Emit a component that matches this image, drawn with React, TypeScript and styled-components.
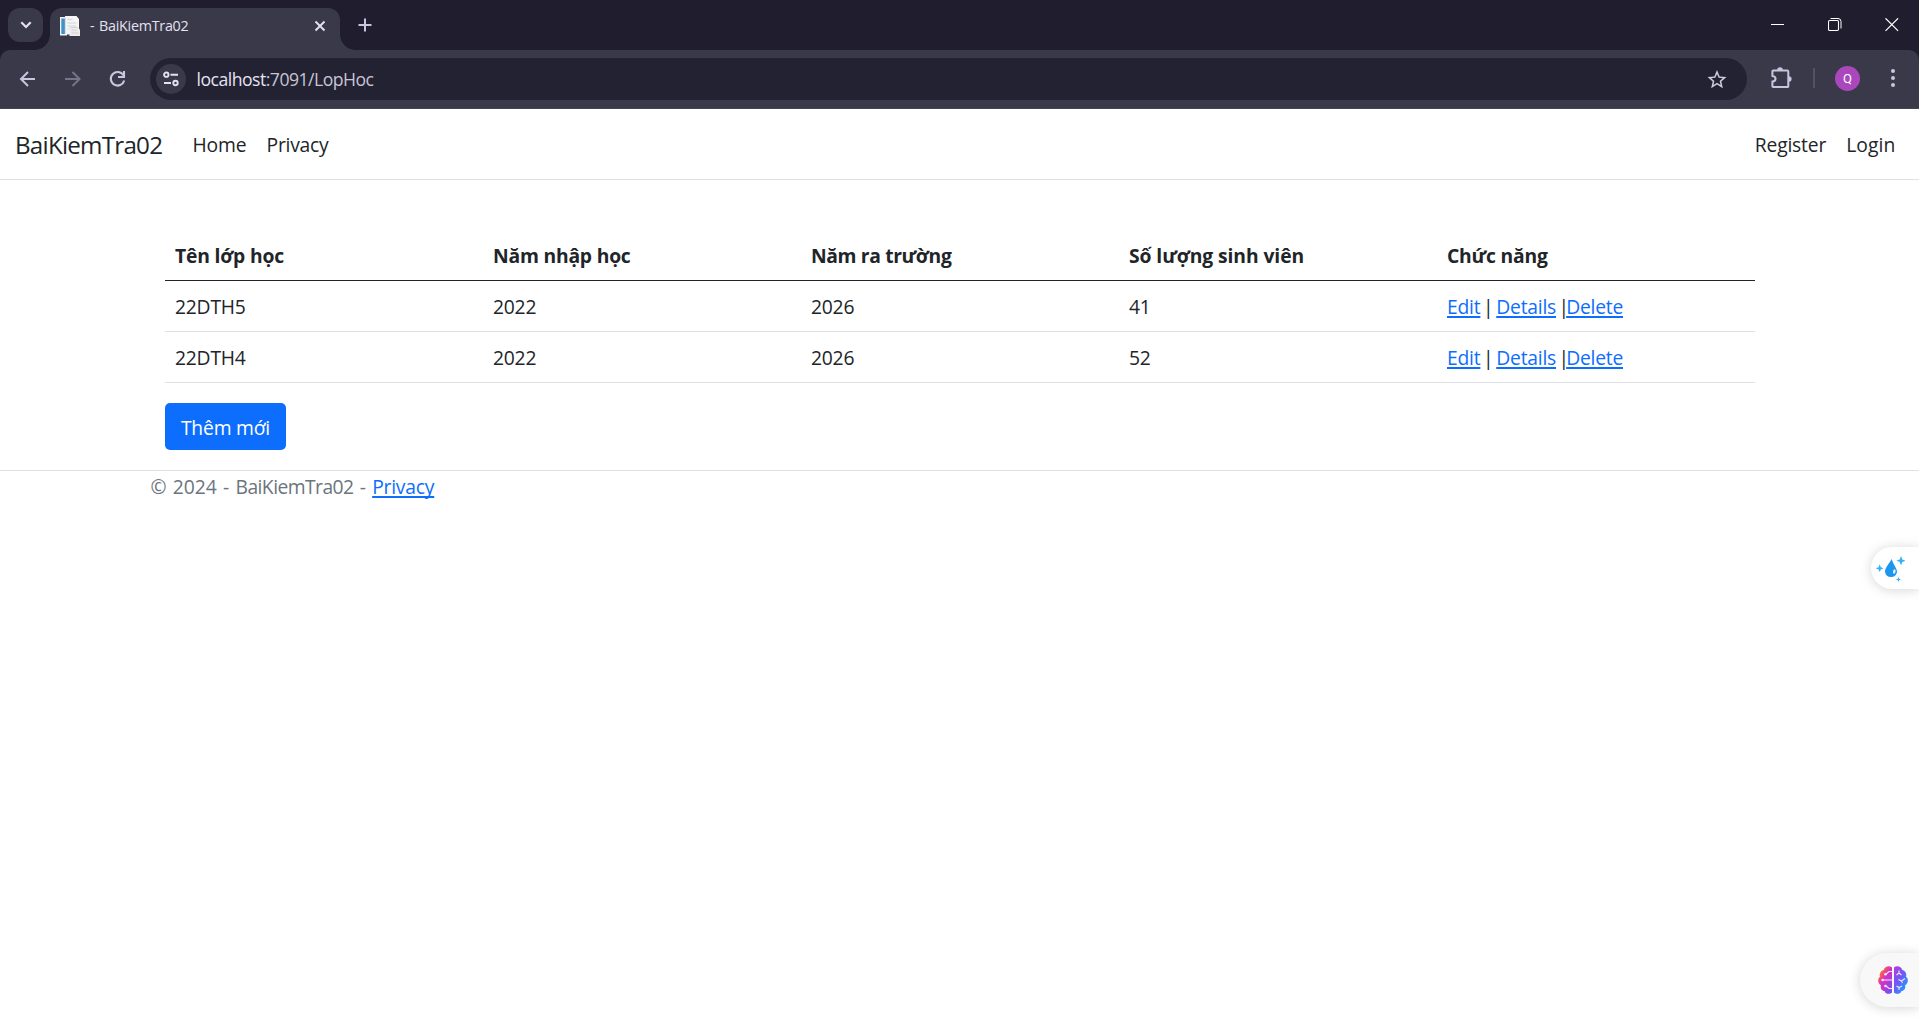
import React from 'react';
import styled, { createGlobalStyle } from 'styled-components';

const GlobalStyle = createGlobalStyle`
  *, *::before, *::after { box-sizing: border-box; }
  html, body { margin: 0; height: 100%; overflow: hidden; }
  body {
    background: #fff;
    color: #212529;
    font-family: "Open Sans", "Noto Sans", sans-serif;
    font-size: 19.3px;
    font-weight: 370;
    line-height: 30px;
  }
`;

/* ---------- browser window ---------- */

const Window = styled.div`
  display: flex;
  flex-direction: column;
  height: 1020px;
  overflow: hidden;
  position: relative;
`;

const TabStrip = styled.div`
  display: flex;
  align-items: flex-start;
  height: 50px;
  padding: 8px 0 0 8px;
  background: #1f1d2e;
  flex: none;
`;

const TabSearch = styled.div`
  display: flex;
  align-items: center;
  justify-content: center;
  width: 35px;
  height: 34px;
  border-radius: 12px;
  background: #3a394a;
`;

const Tab = styled.div`
  position: relative;
  display: flex;
  align-items: center;
  width: 290px;
  height: 42px;
  margin-left: 7px;
  padding: 0 14px 7px 10px;
  border-radius: 12px 12px 0 0;
  background: #3a394a;
  &::before, &::after {
    content: "";
    position: absolute;
    bottom: 0;
    width: 15px;
    height: 15px;
  }
  &::before {
    left: -15px;
    background: radial-gradient(circle at 0 0, transparent 14.5px, #3a394a 15px);
  }
  &::after {
    right: -15px;
    background: radial-gradient(circle at 100% 0, transparent 14.5px, #3a394a 15px);
  }
`;

const TabTitle = styled.span`
  flex: 1;
  margin: 1px 0 0 10px;
  color: #e4e1f0;
  font-size: 14.3px;
  font-weight: 400;
  letter-spacing: -0.26px;
  line-height: 20px;
  white-space: nowrap;
  word-spacing: 1.3px;
`;

const NewTab = styled.div`
  display: flex;
  margin: 10px 0 0 18px;
`;

const WindowButtons = styled.div`
  display: flex;
  align-items: center;
  gap: 43px;
  margin: 10px 20px 0 auto;
`;

const ToolbarBack = styled.div`
  background: #1f1d2e;
  flex: none;
`;

const Toolbar = styled.div`
  display: flex;
  align-items: center;
  height: 59px;
  padding: 0 18px 2px 16px;
  border-radius: 10px 10px 0 0;
  border-bottom: 1px solid #464553;
  background: #3a394a;
`;

const NavButtons = styled.div`
  display: flex;
  gap: 21px;
  margin: 1px 20px 0 0;
`;

const AddressBar = styled.div`
  display: flex;
  align-items: center;
  width: 1597px;
  height: 42px;
  margin-top: 1px;
  padding: 0 18px 0 6px;
  border-radius: 21px;
  background: #232233;
`;

const SiteInfo = styled.div`
  display: flex;
  align-items: center;
  justify-content: center;
  width: 30px;
  height: 30px;
  border-radius: 50%;
  background: #3a394a;
`;

const Url = styled.span`
  flex: 1;
  margin-left: 10.5px;
  color: #c8c5d6;
  font-size: 17.6px;
  font-weight: 400;
  letter-spacing: -0.5px;
  line-height: 26px;
`;

const UrlHost = styled.span`
  color: #e6e3f2;
`;

const Extensions = styled.div`
  display: flex;
  margin-left: 23px;
`;

const Separator = styled.div`
  width: 2px;
  height: 20px;
  margin: 0 20px 0 21px;
  background: #535165;
`;

const Avatar = styled.div`
  display: flex;
  align-items: center;
  justify-content: center;
  width: 25px;
  height: 25px;
  border-radius: 50%;
  background: #ab47bc;
  color: #fff;
  font-family: Roboto, sans-serif;
  font-size: 13px;
  font-weight: 400;
  line-height: 25px;
`;

const Menu = styled.div`
  display: flex;
  margin-left: 29.5px;
`;

/* ---------- web page ---------- */

const Navbar = styled.nav`
  display: flex;
  align-items: center;
  height: 71px;
  padding: 2px 13.500px 0 15px;
  border-bottom: 1px solid #dee2e6;
`;

const Brand = styled.a`
  width: 147.5px;
  margin-right: 20px;
  font-size: 24.2px;
  letter-spacing: -0.76px;
  line-height: 38px;
  white-space: nowrap;
`;

const NavLinks = styled.div`
  display: flex;
  &:last-child { margin-left: auto; }
`;

const NavLink = styled.a<{ $tracking?: number }>`
  padding: 10px;
  letter-spacing: ${(p) => p.$tracking ?? 0}px;
`;

const Main = styled.main`
  margin: 50px 164px 20px 165px;
`;

const Table = styled.table`
  width: 100%;
  margin-bottom: 20px;
  border-collapse: separate;
  border-spacing: 0;
  table-layout: fixed;
`;

const HeadCell = styled.th<{ $tracking: number }>`
  height: 51px;
  padding: 11px 10px 9px;
  border-bottom: 1px solid #212529;
  font-weight: 700;
  letter-spacing: ${(p) => p.$tracking}px;
  text-align: left;
  white-space: nowrap;
`;

const Cell = styled.td`
  height: 51px;
  padding: 11px 10px 9px;
  border-bottom: 1px solid #dee2e6;
  letter-spacing: -0.22px;
  white-space: nowrap;
`;

const Link = styled.a`
  color: #0d6efd;
  letter-spacing: -0.22px;
  text-decoration: underline;
  text-decoration-thickness: 2px;
  text-underline-offset: 1.500px;
  text-decoration-skip-ink: none;
`;

const Bar = styled.span<{ $tight?: boolean }>`
  margin: 0 ${(p) => (p.$tight ? '-2.8px' : '-1.8px')} 0 -2.3px;
`;

const Button = styled.button`
  display: block;
  width: 121px;
  height: 47px;
  padding: 3px 0 0;
  border: 0;
  border-radius: 5px;
  background: #0d6efd;
  color: #fff;
  font: inherit;
  letter-spacing: -0.19px;
`;

const Footer = styled.footer`
  padding: 1px 0 0 150.500px;
  border-top: 1px solid #dee2e6;
  color: #6c757d;
  word-spacing: 1.2px;
`;

const SiteName = styled.span`
  letter-spacing: -0.55px;
`;

/* ---------- floating side widgets ---------- */

const SideWidget = styled.div<{ $top: number; $width: number; $height: number; $fill: string }>`
  position: absolute;
  right: 0;
  top: ${(p) => p.$top}px;
  display: flex;
  align-items: center;
  width: ${(p) => p.$width}px;
  height: ${(p) => p.$height}px;
  border-radius: ${(p) => p.$height / 2}px 0 0 ${(p) => p.$height / 2}px;
  background: ${(p) => p.$fill};
  box-shadow: 0 1px 12px rgba(0, 0, 0, 0.17);
`;

const BrainSlot = styled.div`
  display: flex;
  margin-left: 18px;
`;

/* ---------- drawings ---------- */

const tint = '#c9c5df';

const ChevronDown = () => (
  <svg width="12" height="8" viewBox="0 0 12 8" fill="none" stroke="#e4e1f0" strokeWidth="2.2">
    <path d="M1.300 1.300 6 6l4.700-4.700" />
  </svg>
);

const Favicon = () => (
  <svg width="20" height="20" viewBox="0 0 20 20">
    <path d="M0 1h7v18.500H0z" fill="#f3f3f3" />
    <path d="M1.300 2.500h4V18h-4z" fill="#3f93c9" />
    <path d="M5 0h11.500L19 3v15.500H5z" fill="#f6f6f6" />
    <path d="M7.500 3.500h5M7.500 7h9M7.500 10h9M7.500 13h2" stroke="#dcdfe2" strokeWidth="1.300" />
    <path d="M5.300 1.500V18" stroke="#d3d7da" />
    <path d="M9.500 11H17.500l2.500 2.500V20H9.500z" fill="#ededed" />
    <path d="M10.500 11.500h7M11.500 14h5M11.500 17h7" stroke="#d2d2d2" strokeWidth="1.100" />
  </svg>
);

const TabClose = () => (
  <svg width="12" height="12" viewBox="0 0 12 12" stroke="#e4e1f0" strokeWidth="1.900">
    <path d="M1.500 1.500l9 9M10.500 1.500l-9 9" />
  </svg>
);

const Plus = () => (
  <svg width="14" height="14" viewBox="0 0 14 14" stroke={tint} strokeWidth="2">
    <path d="M7 .5v13M.5 7h13" />
  </svg>
);

const Minimize = () => (
  <svg width="14" height="14" viewBox="0 0 14 14" stroke="#fff">
    <path d="M0 6.500h13" />
  </svg>
);

const Restore = () => (
  <svg width="14" height="14" viewBox="0 0 14 14" fill="none" stroke="#fff">
    <rect x=".5" y="2.500" width="10" height="10" rx="1.200" strokeWidth="1.100" />
    <path d="M2.500 .5h7.500a3 3 0 0 1 3 3V10.500" />
  </svg>
);

const WindowClose = () => (
  <svg width="14" height="14" viewBox="0 0 14 14" stroke="#fff" strokeWidth="1.200">
    <path d="M.5.300l12.600 12.600M13.100.300L.5 12.900" />
  </svg>
);

const Arrow = ({ forward }: { forward?: boolean }) => (
  <svg width="24" height="24" viewBox="0 0 24 24" fill="none" stroke={forward ? '#777489' : tint} strokeWidth="2">
    {forward ? <path d="M4 12h14.500M11.500 5l7 7-7 7" /> : <path d="M19 12H5M12 5l-7 7 7 7" />}
  </svg>
);

const Reload = () => (
  <svg width="24" height="24" viewBox="0 0 24 24" fill="none" stroke={tint} strokeWidth="2.100">
    <path d="M17.500 8.300A6.800 6.800 0 1 0 18.200 13.500" />
    <path d="M18 4v6h-6" />
  </svg>
);

const Tune = () => (
  <svg width="16" height="16" viewBox="0 0 16 16" fill="none" stroke="#e4e1f0" strokeWidth="1.900">
    <circle cx="3.300" cy="3.700" r="2.200" />
    <path d="M7.500 3.700H15M1 12h7" />
    <circle cx="12.500" cy="12" r="2.200" />
  </svg>
);

const Star = () => (
  <svg width="24" height="24" viewBox="0 0 24 24" fill="#cfccd9">
    <path d="M22 9.240l-7.190-.62L12 2 9.190 8.630 2 9.240l5.460 4.730L5.820 21 12 17.270 18.180 21l-1.630-7.030L22 9.240zM12 15.400l-3.760 2.270 1-4.280-3.320-2.880 4.380-.38L12 6.100l1.710 4.040 4.380.38-3.320 2.880 1 4.280L12 15.400z" transform="translate(.6 1.200) scale(.95)" />
  </svg>
);

const Puzzle = () => (
  <svg width="22" height="22" viewBox="0 0 22 22">
    <path
      d="M3.200 3.600h14.300a.8.800 0 0 1 .8.800v14.800a.8.800 0 0 1-.8.800H3.200a.8.800 0 0 1-.8-.8v-4.600c4.200-.5 4.200-5.200 0-5.700V4.400a.8.800 0 0 1 .8-.8z"
      fill="none"
      stroke={tint}
      strokeWidth="2"
    />
    <path d="M7.200 3a2.800 2.800 0 0 1 5.600 0zM18.800 9.200a2.800 2.800 0 0 1 0 5.600z" fill={tint} />
  </svg>
);

const Dots = () => (
  <svg width="6" height="20" viewBox="0 0 6 20" fill={tint}>
    <circle cx="3" cy="3" r="2" />
    <circle cx="3" cy="10" r="2" />
    <circle cx="3" cy="17" r="2" />
  </svg>
);

const Droplet = () => (
  <svg width="34" height="30" viewBox="0 0 34 30">
    <path d="M20.800 6C18 11 14 14.500 14 18.900a6.100 6.100 0 0 0 12 0c0-3.700-4-7.700-5.200-12.900z" fill="#1b97ee" />
    <ellipse cx="23.300" cy="18.500" rx="1.200" ry="2.200" fill="#e9f6ff" transform="rotate(12 23.300 18.500)" />
    <path d="M8.700 11.300l1.100 2.900 2.900 1.100-2.900 1.100-1.100 2.900-1.100-2.900-2.900-1.100 2.900-1.100z" fill="#35b1f7" />
    <path d="M30 3l1.300 3.400L34.700 7.700 31.300 9 30 12.400 28.700 9 25.300 7.700l3.400-1.300z" fill="#35b1f7" />
    <path d="M27.500 24l.7 1.800 1.800.7-1.800.7-.7 1.800-.7-1.800-1.800-.7 1.800-.7z" fill="#35b1f7" />
  </svg>
);

const Brain = () => (
  <svg width="30" height="28" viewBox="0 0 30 28">
    <defs>
      <linearGradient id="lobeLeft" x1="0" y1="0" x2=".8" y2="1">
        <stop offset="0" stopColor="#ffa01f" />
        <stop offset=".25" stopColor="#f5673f" />
        <stop offset=".48" stopColor="#dc2fc4" />
        <stop offset="1" stopColor="#7a4df0" />
      </linearGradient>
      <linearGradient id="lobeRight" x1="0" y1="0" x2=".8" y2="1">
        <stop offset="0" stopColor="#b63be0" />
        <stop offset=".5" stopColor="#6a5cf5" />
        <stop offset="1" stopColor="#12a8ff" />
      </linearGradient>
    </defs>
    <path d="M14 1.500v25c-2 2-6.500 1.700-7.300-1.300C3.500 25 2 22 3 19.300-.3 17.500-.8 12.500 2 10.800 1 7.500 2.800 4.500 5.800 4 6.500.2 11.500-.8 14 1.500z" fill="url(#lobeLeft)" />
    <path d="M16 1.500v25c2 2 6.500 1.700 7.300-1.300 3.200-.2 4.700-3.200 3.700-5.900 3.300-1.800 3.800-6.800 1-8.500 1-3.300-.8-6.300-3.800-6.800C23.500.2 18.500-.8 16 1.500z" fill="url(#lobeRight)" />
    <g fill="none" stroke="#f5e3fb" strokeWidth="1.100">
      <path d="M14 5.500h-3L8 8M5 14h9M14 22.500h-3L8 20" />
      <path d="M18.500 9l2.500-2 2.500 2M21 7V4.500M20.500 13.500l3 1.500 3.500-2.500M23.500 15l1 2M18.500 20l2.500 1.500 3-1.500M21 21.500V24" />
    </g>
    <g fill="#fbe9fb">
      <circle cx="7.500" cy="8.200" r="1.300" />
      <circle cx="4.700" cy="14" r="1.300" />
      <circle cx="7.500" cy="20" r="1.300" />
    </g>
  </svg>
);

/* ---------- data ---------- */

const columns = [
  { title: 'Tên lớp học', tracking: -0.19 },
  { title: 'Năm nhập học', tracking: -0.2 },
  { title: 'Năm ra trường', tracking: -0.36 },
  { title: 'Số lượng sinh viên', tracking: -0.08 },
  { title: 'Chức năng', tracking: -0.2 },
];

const classes = [
  { name: '22DTH5', from: 2022, to: 2026, students: 41 },
  { name: '22DTH4', from: 2022, to: 2026, students: 52 },
];

export default function App() {
  return (
    <Window>
      <GlobalStyle />
      <TabStrip>
        <TabSearch><ChevronDown /></TabSearch>
        <Tab>
          <Favicon />
          <TabTitle>- BaiKiemTra02</TabTitle>
          <TabClose />
        </Tab>
        <NewTab><Plus /></NewTab>
        <WindowButtons>
          <Minimize />
          <Restore />
          <WindowClose />
        </WindowButtons>
      </TabStrip>
      <ToolbarBack>
        <Toolbar>
          <NavButtons>
            <Arrow />
            <Arrow forward />
            <Reload />
          </NavButtons>
          <AddressBar>
            <SiteInfo><Tune /></SiteInfo>
            <Url><UrlHost>localhost</UrlHost>:7091/LopHoc</Url>
            <Star />
          </AddressBar>
          <Extensions><Puzzle /></Extensions>
          <Separator />
          <Avatar>Q</Avatar>
          <Menu><Dots /></Menu>
        </Toolbar>
      </ToolbarBack>

      <Navbar>
        <Brand>BaiKiemTra02</Brand>
        <NavLinks>
          <NavLink $tracking={-0.1}>Home</NavLink>
          <NavLink $tracking={-0.24}>Privacy</NavLink>
        </NavLinks>
        <NavLinks>
          <NavLink $tracking={-0.18}>Register</NavLink>
          <NavLink $tracking={0.1}>Login</NavLink>
        </NavLinks>
      </Navbar>

      <Main>
        <Table>
          <thead>
            <tr>
              {columns.map((c) => (
                <HeadCell key={c.title} $tracking={c.tracking}>{c.title}</HeadCell>
              ))}
            </tr>
          </thead>
          <tbody>
            {classes.map((c) => (
              <tr key={c.name}>
                <Cell>{c.name}</Cell>
                <Cell>{c.from}</Cell>
                <Cell>{c.to}</Cell>
                <Cell>{c.students}</Cell>
                <Cell>
                  <Link>Edit</Link> <Bar>|</Bar> <Link>Details</Link> <Bar $tight>|</Bar><Link>Delete</Link>
                </Cell>
              </tr>
            ))}
          </tbody>
        </Table>
        <Button>Thêm mới</Button>
      </Main>

      <Footer>© 2024 - <SiteName>BaiKiemTra02</SiteName> - <Link>Privacy</Link></Footer>

      <SideWidget $top={547} $width={48} $height={42} $fill="#fff"><Droplet /></SideWidget>
      <SideWidget $top={953} $width={59} $height={54} $fill="#f8f8f8">
        <BrainSlot><Brain /></BrainSlot>
      </SideWidget>
    </Window>
  );
}
